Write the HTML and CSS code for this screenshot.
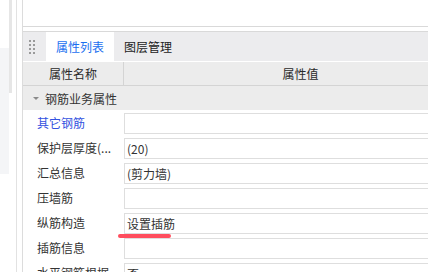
FILE: index.html
```html
<!DOCTYPE html>
<html>
<head>
  <title>属性列表</title>
  <link rel="stylesheet" href="styles.css">
</head>
<body>
  <div class="app">
    <div class="sidebar">
      <div class="side-fill"></div>
      <div class="side-thumb"></div>
    </div>

    <div class="main">
      <div class="top-panel"></div>

      <div class="props">
        <div class="tabs">
          <div class="handle">
            <svg width="6" height="14" viewBox="0 0 6 14">
              <rect x="0" y="0" width="2" height="2" fill="#9a9a9a"/>
              <rect x="4" y="0" width="2" height="2" fill="#9a9a9a"/>
              <rect x="0" y="4" width="2" height="2" fill="#9a9a9a"/>
              <rect x="4" y="4" width="2" height="2" fill="#9a9a9a"/>
              <rect x="0" y="8" width="2" height="2" fill="#9a9a9a"/>
              <rect x="4" y="8" width="2" height="2" fill="#9a9a9a"/>
              <rect x="0" y="12" width="2" height="2" fill="#9a9a9a"/>
              <rect x="4" y="12" width="2" height="2" fill="#9a9a9a"/>
            </svg>
          </div>
          <div class="tab active">属性列表</div>
          <div class="tab">图层管理</div>
        </div>

        <div class="head-row">
          <div class="head-name">属性名称</div>
          <div class="head-value">属性值</div>
        </div>

        <div class="group-row">
          <span class="caret"></span>
          <span>钢筋业务属性</span>
        </div>

        <div class="row">
          <div class="name link">其它钢筋</div>
          <div class="value"></div>
        </div>
        <div class="row">
          <div class="name">保护层厚度(...</div>
          <div class="value">(20)</div>
        </div>
        <div class="row">
          <div class="name">汇总信息</div>
          <div class="value">(剪力墙)</div>
        </div>
        <div class="row">
          <div class="name">压墙筋</div>
          <div class="value"></div>
        </div>
        <div class="row">
          <div class="name">纵筋构造</div>
          <div class="value">
            <span class="marked">设置插筋</span>
          </div>
        </div>
        <div class="row">
          <div class="name">插筋信息</div>
          <div class="value"></div>
        </div>
        <div class="row">
          <div class="name">水平钢筋根据</div>
          <div class="value">否</div>
        </div>
      </div>
    </div>
  </div>
</body>
</html>
```

FILE: styles.css
```css
html,
body {
  margin: 0;
  height: 272px;
  overflow: hidden;
  background: #ffffff;
}

body {
  font-family: "Noto Sans CJK SC", "Noto Sans", sans-serif;
  font-size: 12px;
  color: #333333;
}

.app {
  display: flex;
  height: 272px;
  overflow: hidden;
}

.sidebar {
  position: relative;
  width: 16px;
  flex-shrink: 0;
  border-right: 1px solid #e2e2e2;
  margin-right: 5px;
}

.side-fill {
  position: absolute;
  left: 0;
  top: 48px;
  width: 9px;
  height: 126px;
  background: #f4f5f7;
}

.side-thumb {
  position: absolute;
  left: 9px;
  top: 0;
  width: 3px;
  height: 93px;
  background: #e6e6e6;
}

.main {
  width: 454px;
  flex-shrink: 0;
  border-left: 1px solid #dcdcdc;
}

.top-panel {
  height: 26px;
  border-bottom: 1px solid #d9d9d9;
  margin-bottom: 4px;
}

.props {
  border-top: 1px solid #d9d9d9;
}

.tabs {
  display: flex;
  align-items: stretch;
  height: 29px;
  background: #ececee;
  border-bottom: 1px solid #ffffff;
}

.handle {
  display: flex;
  align-items: center;
  padding-left: 6px;
  margin-right: 11px;
}

.handle svg {
  display: block;
}

.tab {
  display: flex;
  align-items: center;
  padding: 0 10px;
  color: #222222;
}

.tab.active {
  background: #ffffff;
  color: #1a6ff0;
}

.head-row {
  display: flex;
  height: 23px;
  background: #ececec;
  border-bottom: 1px solid #d4d4d4;
  color: #2a2a2a;
}

.head-name {
  width: 100px;
  border-right: 1px solid #d4d4d4;
  display: flex;
  align-items: center;
  justify-content: center;
}

.head-value {
  flex: 1;
  display: flex;
  align-items: center;
  justify-content: center;
}

.group-row {
  display: flex;
  align-items: center;
  height: 24px;
  background: #ececec;
}

.caret {
  width: 0;
  height: 0;
  margin-left: 10px;
  margin-right: 6px;
  border-left: 3px solid transparent;
  border-right: 3px solid transparent;
  border-top: 3px solid #8a8a8a;
}

.row {
  display: flex;
  height: 25px;
}

.name {
  width: 87px;
  padding-left: 14px;
  display: flex;
  align-items: center;
  white-space: nowrap;
  overflow: hidden;
}

.name.link {
  color: #3352e0;
}

.value {
  flex: 1;
  margin-top: 3px;
  height: 19px;
  border: 1px solid #dedede;
  border-right: none;
  padding-left: 2px;
  display: flex;
  align-items: center;
}

.marked {
  position: relative;
}

.marked::after {
  content: "";
  position: absolute;
  left: -9px;
  right: 4px;
  top: 19px;
  height: 4px;
  border-radius: 2px;
  background: #ff4d5e;
}
```
